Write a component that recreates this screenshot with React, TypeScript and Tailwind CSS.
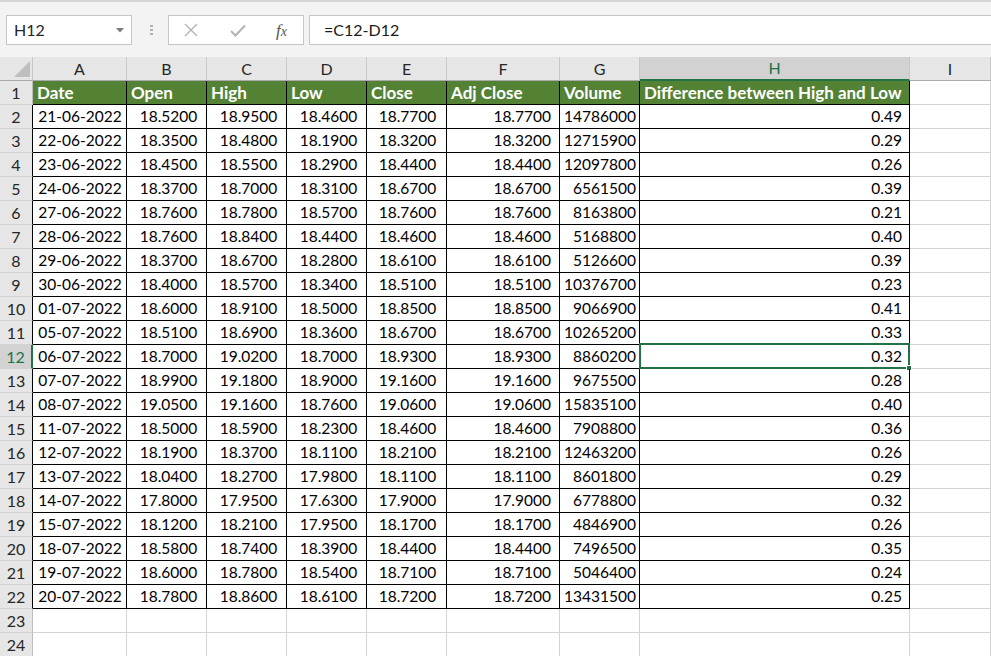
import React from 'react';

type Row = [string, string, string, string, string, string, string, string];

const rows: Row[] = [
	['21-06-2022', '18.5200', '18.9500', '18.4600', '18.7700', '18.7700', '14786000', '0.49'],
	['22-06-2022', '18.3500', '18.4800', '18.1900', '18.3200', '18.3200', '12715900', '0.29'],
	['23-06-2022', '18.4500', '18.5500', '18.2900', '18.4400', '18.4400', '12097800', '0.26'],
	['24-06-2022', '18.3700', '18.7000', '18.3100', '18.6700', '18.6700', '6561500', '0.39'],
	['27-06-2022', '18.7600', '18.7800', '18.5700', '18.7600', '18.7600', '8163800', '0.21'],
	['28-06-2022', '18.7600', '18.8400', '18.4400', '18.4600', '18.4600', '5168800', '0.40'],
	['29-06-2022', '18.3700', '18.6700', '18.2800', '18.6100', '18.6100', '5126600', '0.39'],
	['30-06-2022', '18.4000', '18.5700', '18.3400', '18.5100', '18.5100', '10376700', '0.23'],
	['01-07-2022', '18.6000', '18.9100', '18.5000', '18.8500', '18.8500', '9066900', '0.41'],
	['05-07-2022', '18.5100', '18.6900', '18.3600', '18.6700', '18.6700', '10265200', '0.33'],
	['06-07-2022', '18.7000', '19.0200', '18.7000', '18.9300', '18.9300', '8860200', '0.32'],
	['07-07-2022', '18.9900', '19.1800', '18.9000', '19.1600', '19.1600', '9675500', '0.28'],
	['08-07-2022', '19.0500', '19.1600', '18.7600', '19.0600', '19.0600', '15835100', '0.40'],
	['11-07-2022', '18.5000', '18.5900', '18.2300', '18.4600', '18.4600', '7908800', '0.36'],
	['12-07-2022', '18.1900', '18.3700', '18.1100', '18.2100', '18.2100', '12463200', '0.26'],
	['13-07-2022', '18.0400', '18.2700', '17.9800', '18.1100', '18.1100', '8601800', '0.29'],
	['14-07-2022', '17.8000', '17.9500', '17.6300', '17.9000', '17.9000', '6778800', '0.32'],
	['15-07-2022', '18.1200', '18.2100', '17.9500', '18.1700', '18.1700', '4846900', '0.26'],
	['18-07-2022', '18.5800', '18.7400', '18.3900', '18.4400', '18.4400', '7496500', '0.35'],
	['19-07-2022', '18.6000', '18.7800', '18.5400', '18.7100', '18.7100', '5046400', '0.24'],
	['20-07-2022', '18.7800', '18.8600', '18.6100', '18.7200', '18.7200', '13431500', '0.25'],
];

const headers = ['Date', 'Open', 'High', 'Low', 'Close', 'Adj Close', 'Volume', 'Difference between High and Low'];
const letters = ['A', 'B', 'C', 'D', 'E', 'F', 'G', 'H', 'I'];
const widths = ['w-[94px]', 'w-[80px]', 'w-[80px]', 'w-[80px]', 'w-[80px]', 'w-[113px]', 'w-[80px]', 'w-[270px]', 'w-[81px]'];
// alignment of the values per column
const align = [
	'justify-center pl-[1px]',
	'justify-center pl-[4px]',
	'justify-center pl-[4px]',
	'justify-center pl-[4px]',
	'justify-center pl-[2px]',
	'justify-end pr-[8px]',
	'justify-end pr-[3px]',
	'justify-end pr-[7px]',
];

const RowHead = ({ n, dark }: { n: number; dark?: boolean }) => {
	const selected = n === 12;
	return (
		<div
			className={`box-border flex h-[24px] w-[33px] shrink-0 items-center justify-center border-b border-b-[#d0d0d0] text-[16px] ${
				selected
					? 'border-r-2 border-r-[#217346] bg-[#d2d2d2] text-[#217346]'
					: `border-r ${dark ? 'border-r-black' : 'border-r-[#bdbdbd]'} bg-[#e6e6e6] text-[#262626]`
			}`}
		>
			{n}
		</div>
	);
};

const FormulaBar = () => (
	<div className="h-[57px] border-t-[2px] border-[#d6d6d6] bg-[#f3f3f3]">
		<div className="flex items-start pt-[13px]">
			<div className="ml-[6px] box-border flex h-[30px] w-[126px] items-center justify-between border border-[#c6c6c6] bg-white pl-[7px] pr-[7px] text-[16px] text-[#262626]">
				<span>H12</span>
				<svg width="8" height="5" viewBox="0 0 8 5">
					<path d="M0 0 L8 0 L4 4.5 Z" fill="#7a7a7a" />
				</svg>
			</div>
			<div className="ml-[17px] flex h-[30px] w-[4px] flex-col items-center justify-center gap-[2px]">
				<span className="h-[2px] w-[3px] bg-[#b0b0b0]" />
				<span className="h-[2px] w-[3px] bg-[#b0b0b0]" />
				<span className="h-[2px] w-[3px] bg-[#b0b0b0]" />
			</div>
			<div className="ml-[15px] box-border flex h-[30px] w-[136px] items-center border border-[#c6c6c6] bg-white">
				<svg className="ml-[15px]" width="14" height="14" viewBox="0 0 14 14">
					<path d="M1 1 L13 13 M13 1 L1 13" stroke="#b3b3b3" strokeWidth="1.4" fill="none" />
				</svg>
				<svg className="ml-[32px]" width="16" height="13" viewBox="0 0 16 13">
					<path d="M1 7 L5.5 11.5 L15 1.5" stroke="#b3b3b3" strokeWidth="2" fill="none" />
				</svg>
				<span className="ml-[30px] font-['Liberation_Serif',serif] text-[17px] italic text-[#555]">
					f<span className="text-[14px]">x</span>
				</span>
			</div>
			<div className="ml-[5px] box-border flex h-[30px] flex-1 items-center border border-r-0 border-[#c6c6c6] bg-white pl-[14px] text-[16px] text-[#1a1a1a]">
				=C12-D12
			</div>
		</div>
	</div>
);

export default function App() {
	return (
		<div className="h-[656px] w-[991px] overflow-hidden bg-white font-['Lato','Liberation_Sans',sans-serif] text-[15.5px] leading-none">
			<FormulaBar />

			{/* column letters */}
			<div className="flex h-[24px]">
				<div className="box-border flex h-[24px] w-[33px] shrink-0 items-end justify-end border-r border-b border-r-[#c8c8c8] border-b-[#ababab] bg-[#e6e6e6] pb-[3px] pr-[2px]">
					<svg width="16" height="16" viewBox="0 0 16 16">
						<path d="M16 0 L16 16 L0 16 Z" fill="#bfbfbf" />
					</svg>
				</div>
				{letters.map((l, i) => (
					<div
						key={l}
						className={`box-border flex h-[24px] shrink-0 items-center justify-center border-r border-r-[#c8c8c8] text-[16px] ${widths[i]} ${
							l === 'H'
								? 'border-b-2 border-b-[#217346] bg-[#d2d2d2] text-[#217346]'
								: 'border-b border-b-[#ababab] bg-[#e6e6e6] text-[#262626]'
						}`}
					>
						{l}
					</div>
				))}
			</div>

			{/* header row */}
			<div className="flex h-[24px]">
				<RowHead n={1} />
				{headers.map((h, i) => (
					<div
						key={h}
						className={`box-border flex h-[24px] shrink-0 items-center border-r border-b border-black bg-[#548235] pl-[4px] text-[17px] font-bold text-white ${widths[i]}`}
					>
						{h}
					</div>
				))}
				<div className={`box-border h-[24px] shrink-0 border-r border-b border-[#d4d4d4] ${widths[8]}`} />
			</div>

			{/* data rows */}
			{rows.map((r, ri) => {
				const n = ri + 2;
				return (
					<div key={n} className="flex h-[24px]">
						<RowHead n={n} dark />
						{r.map((v, ci) => (
							<div
								key={ci}
								className={`relative box-border flex h-[24px] shrink-0 items-center border-r border-b border-black text-black ${widths[ci]} ${align[ci]}`}
							>
								{v}
								{n === 12 && ci === 7 && (
									<div className="absolute -top-[2px] -left-[1px] -right-[1px] -bottom-[1px] border-2 border-[#217346]">
										<span className="absolute -right-[4px] -bottom-[4px] h-[6px] w-[6px] border border-white bg-[#217346]" />
									</div>
								)}
							</div>
						))}
						<div className={`box-border h-[24px] shrink-0 border-r border-b border-[#d4d4d4] ${widths[8]}`} />
					</div>
				);
			})}

			{/* empty rows */}
			{[23, 24].map((n) => (
				<div key={n} className="flex h-[24px]">
					<RowHead n={n} />
					{widths.map((w, i) => (
						<div key={i} className={`box-border h-[24px] shrink-0 border-r border-b border-[#d4d4d4] ${w}`} />
					))}
				</div>
			))}
		</div>
	);
}
